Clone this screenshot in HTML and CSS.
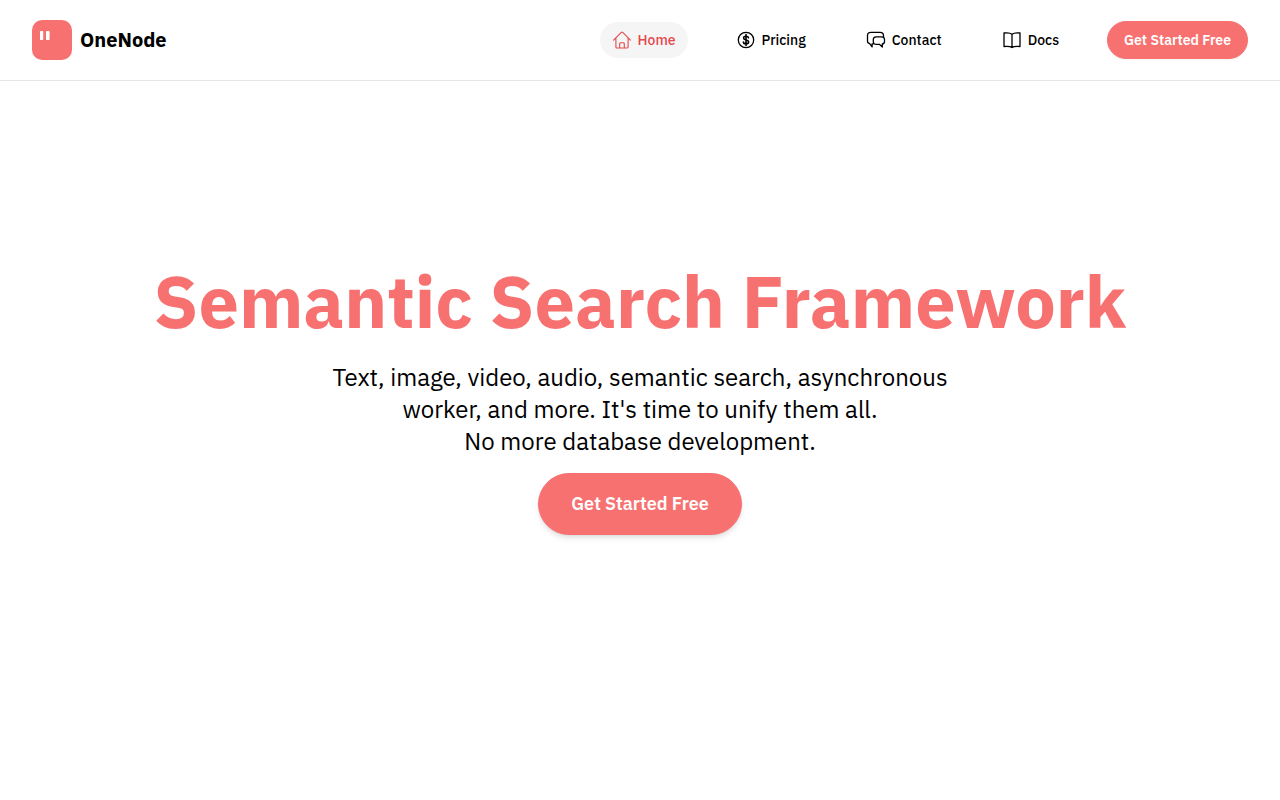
FILE: index.html
```html
<!DOCTYPE html>
<html lang="en">
<head>
<meta charset="utf-8">
<meta name="viewport" content="width=device-width, initial-scale=1">
<title>OneNode</title>
<link rel="stylesheet" href="styles.css">
</head>
<body>
<header class="header">
  <a class="brand" href="#">
    <svg class="brand-mark" viewBox="0 0 40 40" aria-hidden="true">
      <rect width="40" height="40" rx="10" fill="#f87171"/>
      <rect x="8" y="11" width="3.2" height="9" rx=".8" fill="#fff"/>
      <rect x="14" y="11" width="3.6" height="9" rx=".8" fill="#fff"/>
    </svg>
    <span>OneNode</span>
  </a>
  <nav class="nav">
    <a class="nav-link active" href="#">
      <svg class="icon" viewBox="0 0 20 20" aria-hidden="true"><path d="M1.600 10.200 9.300 2.400a1 1 0 0 1 1.400 0l7.700 7.800M3.900 8v9.100a.9.900 0 0 0 .9.900h10.400a.9.900 0 0 0 .9-.9V8M7.700 18v-4.300a.9.900 0 0 1 .9-.9h2.800a.9.900 0 0 1 .9.900V18"/></svg>
      <span>Home</span>
    </a>
    <a class="nav-link" href="#">
      <svg class="icon" viewBox="0 0 20 20" aria-hidden="true"><circle cx="10" cy="10" r="7.700"/><path stroke-width="1.600" d="M12.500 7.800c-.2-1-1.100-1.600-2.500-1.600S7.600 6.900 7.600 8c0 2.700 5 1.200 5 4 0 1.200-1.100 1.900-2.600 1.900s-2.500-.7-2.600-1.800M10 4.600v10.800"/></svg>
      <span>Pricing</span>
    </a>
    <a class="nav-link" href="#">
      <svg class="icon" viewBox="0 0 20 20" aria-hidden="true"><path d="M7 13.900H6.100v3L3.700 13.600C2.200 13.300 1.500 12.400 1.500 11V5.400C1.500 3.300 3 2.400 5 2.400h9c2.300 0 3.500 1 3.500 3.200v1.200M10.300 6.800h5.300c1.900 0 2.900 1 2.900 2.800v1.800c0 1.500-.8 2.400-2.200 2.600v3L13.400 14.300h-3.100c-2 0-3-.9-3-2.700V9.500c0-1.800 1.100-2.700 3-2.700Z"/></svg>
      <span>Contact</span>
    </a>
    <a class="nav-link" href="#">
      <svg class="icon" viewBox="0 0 20 20" aria-hidden="true"><path d="M10 4.300C8.200 2.700 5 2.600 2 3v13.500c3-.4 6.200-.3 8 1.100 1.800-1.400 5-1.500 8-1.100V3c-3-.4-6.200-.3-8 1.300Zm0 0v13.300"/></svg>
      <span>Docs</span>
    </a>
    <button class="button" type="button">Get Started Free</button>
  </nav>
</header>
<main class="hero">
  <h1 class="title">Semantic Search Framework</h1>
  <p class="lead">Text, image, video, audio, semantic search, asynchronous worker, and more. It's time to unify them all.<br>No more database development.</p>
  <button class="button button-large" type="button">Get Started Free</button>
</main>
</body>
</html>
```
FILE: styles.css
```css
* { box-sizing: border-box; }
body {
  margin: 0;
  min-height: 100vh;
  display: flex;
  flex-direction: column;
  background: #fff;
  color: #000;
  font-family: "IBM Plex Sans", "Noto Sans", sans-serif;
}
.header {
  display: flex;
  align-items: center;
  justify-content: space-between;
  padding: 20px 32px;
  border-bottom: 1px solid #e5e5e5;
}
.brand {
  display: flex;
  align-items: center;
  gap: 8px;
  color: inherit;
  font-size: 20px;
  font-weight: 700;
  line-height: 28px;
  text-decoration: none;
}
.brand-mark { width: 40px; height: 40px; }
.nav { display: flex; align-items: center; gap: 36px; }
.nav-link {
  display: flex;
  align-items: center;
  gap: 6px;
  padding: 8px 12px;
  border-radius: 18px;
  color: inherit;
  font-size: 14px;
  font-weight: 500;
  line-height: 20px;
  text-decoration: none;
}
.nav-link.active { background: #f5f5f5; color: #e5484d; }
.icon {
  width: 20px;
  height: 20px;
  fill: none;
  stroke: currentColor;
  stroke-width: 1.3;
  stroke-linecap: round;
  stroke-linejoin: round;
}
.active .icon { stroke-width: 1.1; }
.button {
  padding: 8px 16px;
  border: 1px solid #f87171;
  border-radius: 32px;
  background: #f87171;
  color: #fff;
  font-family: inherit;
  font-size: 14px;
  font-weight: 600;
  line-height: 20px;
  cursor: pointer;
  box-shadow: 0 1px 2px rgb(0 0 0 / 5%);
}
.hero {
  flex: 1;
  display: flex;
  flex-direction: column;
  align-items: center;
  justify-content: center;
  padding: 0 32px 82px;
  text-align: center;
}
.title {
  margin: 0;
  color: #f87171;
  font-size: 72px;
  font-weight: 700;
  line-height: 72px;
}
.lead {
  max-width: 672px;
  margin: 24px 0 16px;
  font-size: 24px;
  line-height: 32px;
}
.button-large {
  padding: 16px 32px;
  font-size: 18px;
  line-height: 28px;
  box-shadow: 0 4px 6px -1px rgb(0 0 0 / 10%), 0 2px 4px -2px rgb(0 0 0 / 10%);
}
```
